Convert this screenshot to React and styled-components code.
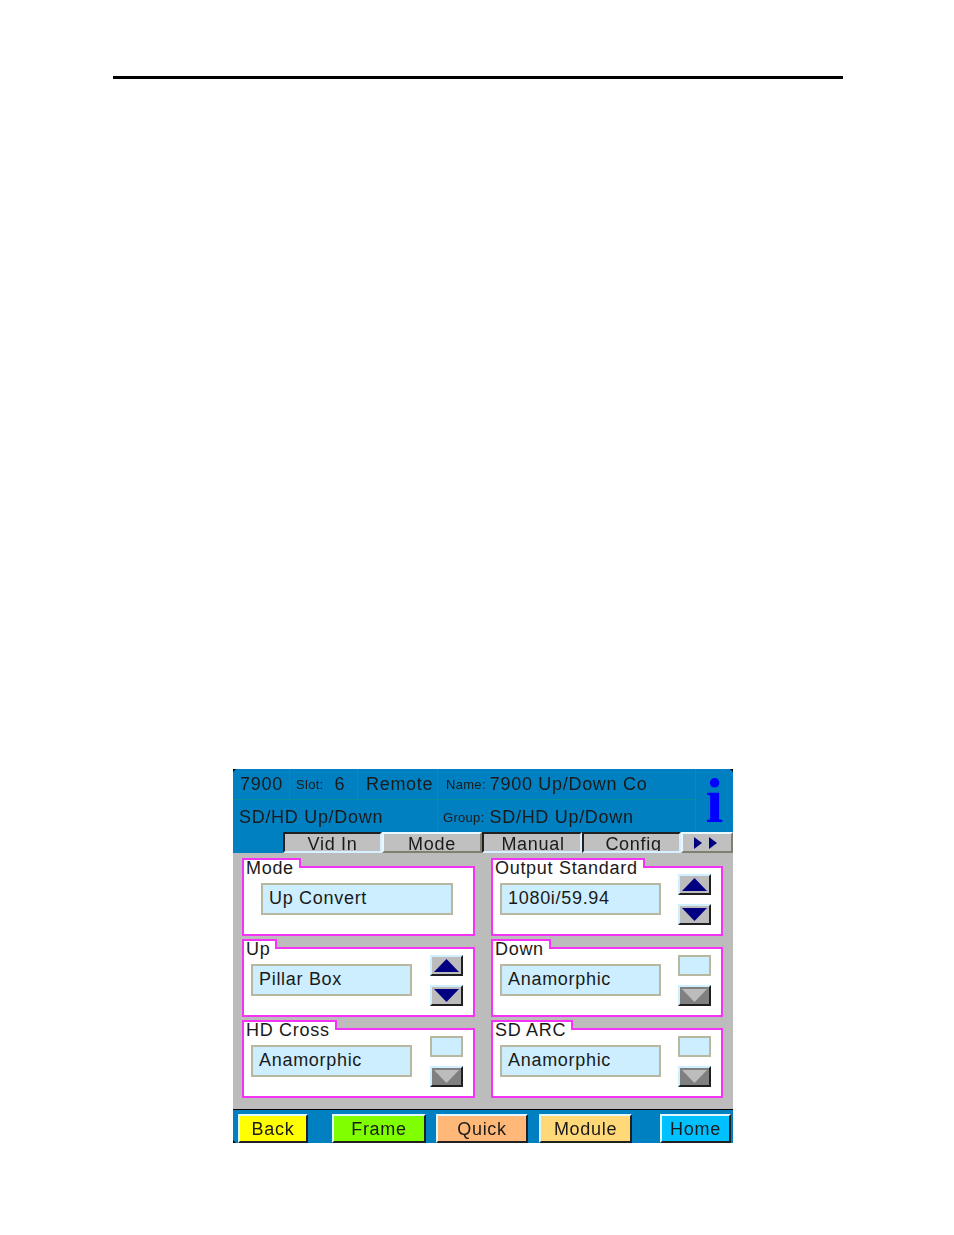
import React from "react";
import styled, { createGlobalStyle, css } from "styled-components";

const GlobalStyle = createGlobalStyle`
  html, body {
    margin: 0;
    padding: 0;
    background: #fff;
  }
  body {
    font-family: "Liberation Sans", Arial, sans-serif;
    color: #1a1a1a;
  }
`;

const Page = styled.div`
  width: 954px;
  height: 1235px;
  padding-top: 76px;
  box-sizing: border-box;
  overflow: hidden;
`;

const TopRule = styled.div`
  width: 730px;
  height: 3px;
  margin-left: 113px;
  background: #000;
`;

const Screen = styled.div`
  position: relative;
  width: 500px;
  height: 374px;
  margin: 690px 0 0 233px;
  display: flex;
  flex-direction: column;
  background: #0080c0;
  letter-spacing: 0.7px;
  filter: blur(0.45px);

  /* little black corners of the bezel */
  &::before,
  &::after {
    content: "";
    position: absolute;
    top: 0;
    width: 3px;
    height: 3px;
    background: #000;
  }
  &::before {
    left: 0;
    clip-path: polygon(0 0, 100% 0, 0 100%);
  }
  &::after {
    right: 0;
    clip-path: polygon(0 0, 100% 0, 100% 100%);
  }
`;

const Header = styled.div`
  height: 63px;
  display: grid;
  grid-template-columns: 57px 68px 80px 258px 37px;
  grid-template-rows: 31px 32px;
  font-size: 18px;
`;

const HeaderCell = styled.div`
  display: flex;
  align-items: center;
  padding-left: ${(p) => p.$pad ?? 6}px;
  padding-top: ${(p) => (p.$lower ? 3 : 0)}px;
  box-sizing: border-box;
  white-space: nowrap;
  border-right: 1px solid #0a8f96;
  border-bottom: ${(p) => (p.$lower ? "0" : "1px solid #0a8f96")};
  grid-column: ${(p) => p.$span || "auto"};
`;

const TinyLabel = styled.span`
  font-size: 13px;
  letter-spacing: 0.3px;
  margin-right: ${(p) => p.$gap ?? 3}px;
`;

const InfoCell = styled.div`
  grid-column: 5;
  grid-row: 1 / span 2;
  display: flex;
  justify-content: center;
  align-items: center;
  color: #0000ff;
  font-family: "Liberation Serif", serif;
  font-weight: 700;
  font-size: 64px;
  line-height: 1;
  letter-spacing: 0;
`;

const TabRow = styled.div`
  height: 21px;
  display: flex;
  padding-left: 50px;
`;

const raisedEdges = css`
  border-style: solid;
  border-width: 2px;
  border-color: ${(p) =>
    p.$active ? "#e8f8ff #808070 #808070 #e8f8ff" : "#202020 #d8f0ff #d8f0ff #202020"};
`;

const Tab = styled.div`
  ${raisedEdges}
  width: ${(p) => p.$w}px;
  box-sizing: border-box;
  display: flex;
  justify-content: center;
  align-items: center;
  overflow: hidden;
  background: #c0c0c0;
  font-size: 18px;
  line-height: 17px;
  padding: 3px 0 0 ${(p) => p.$nudge ?? 0}px;
`;

const TabArrows = styled.svg`
  width: 24px;
  height: 12px;
  margin: -3px 3px 0 0;
`;

const Content = styled.div`
  height: 256px;
  box-sizing: border-box;
  padding: 5px 10px 0 9px;
  background: #bcbcbc;
  display: grid;
  grid-template-columns: 233px 232px;
  grid-auto-rows: 81px;
  column-gap: 16px;
`;

const Panel = styled.section`
  display: flex;
  flex-direction: column;
  align-items: flex-start;
`;

const Legend = styled.div`
  position: relative;
  z-index: 1;
  height: 8px;
  padding: 0 5px 0 2px;
  background: #fff;
  border: 2px solid #f433f4;
  border-bottom: 0;
  font-size: 18px;
  line-height: 17px;
  white-space: nowrap;
`;

const PanelBody = styled.div`
  width: 100%;
  height: 70px;
  box-sizing: border-box;
  margin-top: -2px;
  padding: 6px 10px 0 ${(p) => p.$inset ?? 7}px;
  display: flex;
  justify-content: space-between;
  align-items: flex-start;
  background: #fff;
  border: 2px solid #f433f4;
`;

const Field = styled.div`
  width: ${(p) => p.$w ?? 161}px;
  height: 32px;
  margin-top: 9px;
  box-sizing: border-box;
  padding: 0 0 1px 6px;
  display: flex;
  align-items: center;
  background: #cceeff;
  border: 2px solid #b8b8a0;
  font-size: 18px;
  white-space: nowrap;
`;

const Spinner = styled.div`
  width: 33px;
  display: flex;
  flex-direction: column;
  gap: 9px;
`;

const SpinButton = styled.div`
  width: 33px;
  height: 21px;
  box-sizing: border-box;
  display: flex;
  justify-content: center;
  align-items: center;
  background: ${(p) => (p.$off ? "#808080" : "#bcbcbc")};
  border-style: solid;
  border-width: 2px;
  border-color: #d0f0ff #202020 #202020 #d0f0ff;
`;

const EmptyButton = styled.div`
  width: 33px;
  height: 21px;
  box-sizing: border-box;
  background: #cceeff;
  border: 2px solid #b8b8a0;
`;

const Footer = styled.div`
  position: relative;
  height: 34px;
  box-sizing: border-box;
  padding: 4px 0 0 5px;
  display: flex;
  border-top: 1px solid #000;

  &::before {
    content: "";
    position: absolute;
    left: 0;
    bottom: 0;
    width: 3px;
    height: 3px;
    background: #000;
    clip-path: polygon(0 0, 100% 100%, 0 100%);
  }
`;

const NavButton = styled.div`
  width: ${(p) => p.$w}px;
  margin-left: ${(p) => p.$gap ?? 0}px;
  box-sizing: border-box;
  padding-top: 2px;
  display: flex;
  justify-content: center;
  align-items: center;
  background: ${(p) => p.$bg};
  border-style: solid;
  border-width: 2px;
  border-color: #e0f8ff #202020 #202020 #e0f8ff;
  font-size: 18px;
`;

const Triangle = ({ down, color }) => (
  <svg width="25" height="15" viewBox="0 0 25 15">
    <polygon points={down ? "0,1 25,1 12.5,14" : "12.5,1 25,14 0,14"} fill={color} />
  </svg>
);

const Arrows = ({ up, down }) => (
  <Spinner>
    {up ? (
      <SpinButton>
        <Triangle color="#000080" />
      </SpinButton>
    ) : (
      <EmptyButton />
    )}
    <SpinButton $off={!down}>
      <Triangle down color={down ? "#000080" : "#bcbcbc"} />
    </SpinButton>
  </Spinner>
);

const panels = [
  { title: "Mode", value: "Up Convert", inset: 17, width: 192 },
  { title: "Output Standard", value: "1080i/59.94", arrows: true },
  { title: "Up", value: "Pillar Box", arrows: true },
  { title: "Down", value: "Anamorphic" },
  { title: "HD Cross", value: "Anamorphic" },
  { title: "SD ARC", value: "Anamorphic" },
];

const App = () => {
  return (
    <Page>
      <GlobalStyle />
      <TopRule />
      <Screen>
        <Header>
          <HeaderCell $pad={7}>7900</HeaderCell>
          <HeaderCell>
            <TinyLabel $gap={11}>Slot:</TinyLabel>6
          </HeaderCell>
          <HeaderCell $pad={8}>Remote</HeaderCell>
          <HeaderCell $pad={8}>
            <TinyLabel $gap={4}>Name:</TinyLabel>7900 Up/Down Co
          </HeaderCell>
          <InfoCell>i</InfoCell>
          <HeaderCell $span="1 / span 3" $lower>SD/HD Up/Down</HeaderCell>
          <HeaderCell $pad={5} $lower>
            <TinyLabel $gap={5}>Group:</TinyLabel>SD/HD Up/Down
          </HeaderCell>
        </Header>
        <TabRow>
          <Tab $w={99}>Vid In</Tab>
          <Tab $w={100} $active>
            Mode
          </Tab>
          <Tab $w={100} $nudge={2}>Manual</Tab>
          <Tab $w={99} $nudge={4}>Config</Tab>
          <Tab $w={52} $active>
            <TabArrows viewBox="0 0 24 12">
              <polygon points="0,0 8,6 0,12" fill="#000080" />
              <polygon points="15,0 23,6 15,12" fill="#000080" />
            </TabArrows>
          </Tab>
        </TabRow>
        <Content>
          {panels.map((p) => (
            <Panel key={p.title}>
              <Legend>{p.title}</Legend>
              <PanelBody $inset={p.inset}>
                <Field $w={p.width}>{p.value}</Field>
                {p.width ? null : <Arrows up={p.arrows} down={p.arrows} />}
              </PanelBody>
            </Panel>
          ))}
        </Content>
        <Footer>
          <NavButton $w={70} $bg="#ffff00">Back</NavButton>
          <NavButton $w={94} $gap={24} $bg="#80ff00">Frame</NavButton>
          <NavButton $w={92} $gap={10} $bg="#ffb878">Quick</NavButton>
          <NavButton $w={93} $gap={11} $bg="#ffd878">Module</NavButton>
          <NavButton $w={71} $gap={28} $bg="#00c0ff">Home</NavButton>
        </Footer>
      </Screen>
    </Page>
  );
};

export default App;
